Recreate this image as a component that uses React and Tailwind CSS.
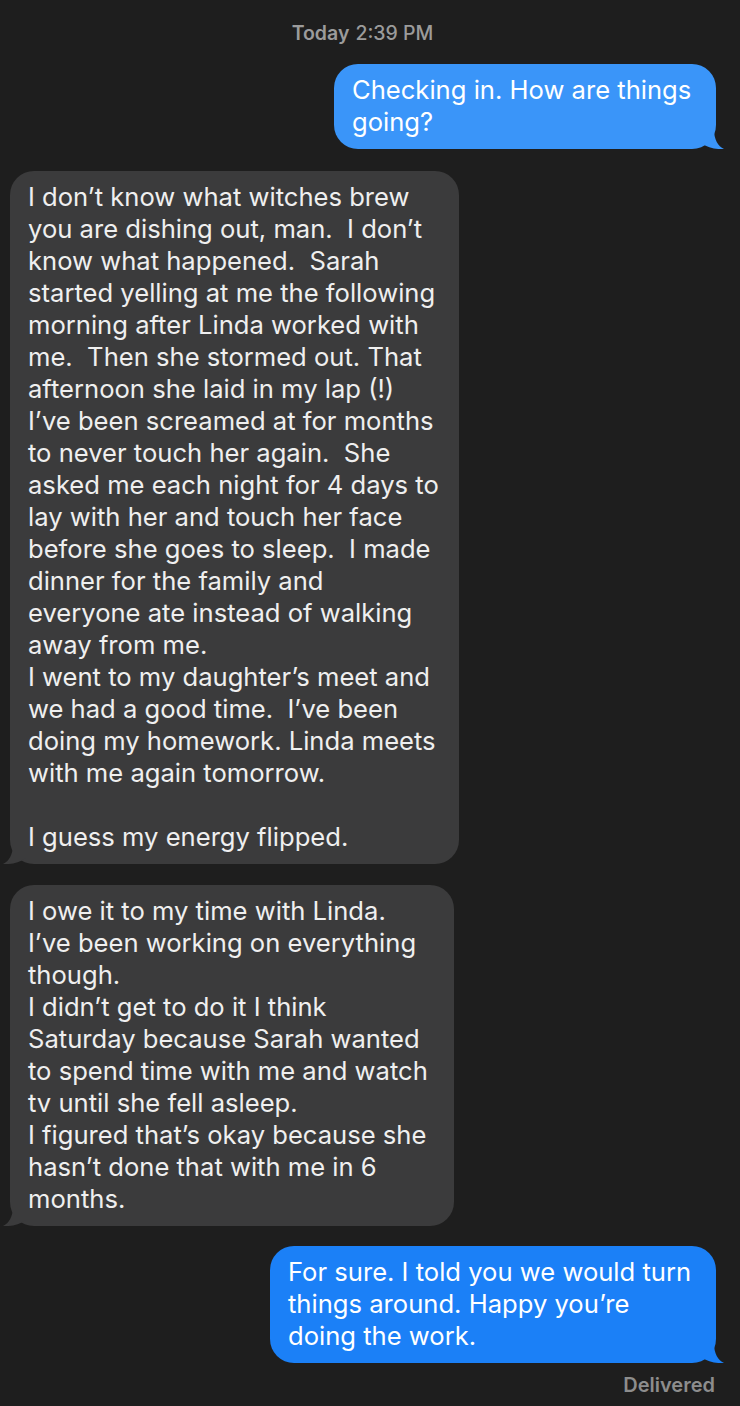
import React from "react";

const GRAY = "#3b3b3c";

const Tail = ({ side, color }) =>
  side === "left" ? (
    <svg className="absolute left-[-7px] bottom-0" width="24" height="20" viewBox="0 0 24 20">
      <path d="M10 0 C10 11 6 17 0 20 C8 20.5 16 19 23 14 L23 0 Z" fill={color} />
    </svg>
  ) : (
    <svg className="absolute right-[-8px] bottom-0" width="24" height="20" viewBox="0 0 24 20">
      <path d="M14 0 C14 11 18 17 24 20 C16 20.5 8 19 1 14 L1 0 Z" fill={color} />
    </svg>
  );

const Bubble = ({ side, color, width, textClass, children }) => (
  <div
    className={`relative rounded-[24px] px-[18px] pt-[10px] pb-[11px] ${width} ${textClass}`}
    style={{ backgroundColor: color }}
  >
    <Tail side={side} color={color} />
    <p className="relative whitespace-pre text-[25.6px] leading-[32px]">{children}</p>
  </div>
);

const first = `I don’t know what witches brew
you are dishing out, man.  I don’t
know what happened.  Sarah
started yelling at me the following
morning after Linda worked with
me.  Then she stormed out. That
afternoon she laid in my lap (!)
I’ve been screamed at for months
to never touch her again.  She
asked me each night for 4 days to
lay with her and touch her face
before she goes to sleep.  I made
dinner for the family and
everyone ate instead of walking
away from me.
I went to my daughter’s meet and
we had a good time.  I’ve been
doing my homework. Linda meets
with me again tomorrow.

I guess my energy flipped.`;

const second = `I owe it to my time with Linda.
I’ve been working on everything
though.
I didn’t get to do it I think
Saturday because Sarah wanted
to spend time with me and watch
tv until she fell asleep.
I figured that’s okay because she
hasn’t done that with me in 6
months.`;

export default function App() {
  return (
    <div className="min-h-[1406px] bg-[#1e1e1e] font-['Inter','Liberation_Sans',sans-serif] antialiased pt-[21px]">
      <div className="flex justify-center pr-[15px] text-[19.5px] leading-[24px] text-[#9b9b9b]">
        <span className="font-semibold">Today</span>
        <span className="ml-[6px] font-medium">2:39 PM</span>
      </div>

      <div className="mt-[19px] flex justify-end pr-[24px]">
        <Bubble side="right" color="#3a95f9" width="w-[382px]" textClass="text-white">
          {`Checking in. How are things
going?`}
        </Bubble>
      </div>

      <div className="mt-[22px] flex pl-[10px]">
        <Bubble side="left" color={GRAY} width="w-[449px]" textClass="text-[#efefef]">
          {first}
        </Bubble>
      </div>

      <div className="mt-[21px] flex pl-[10px]">
        <Bubble side="left" color={GRAY} width="w-[444px]" textClass="text-[#efefef]">
          {second}
        </Bubble>
      </div>

      <div className="mt-[20px] flex justify-end pr-[24px]">
        <Bubble side="right" color="#1b80f7" width="w-[446px]" textClass="text-white">
          {`For sure. I told you we would turn
things around. Happy you’re
doing the work.`}
        </Bubble>
      </div>

      <div className="mt-[10px] flex justify-end pr-[25px] text-[20px] leading-[24px] font-semibold text-[#8d8d8d]">
        Delivered
      </div>
    </div>
  );
}
